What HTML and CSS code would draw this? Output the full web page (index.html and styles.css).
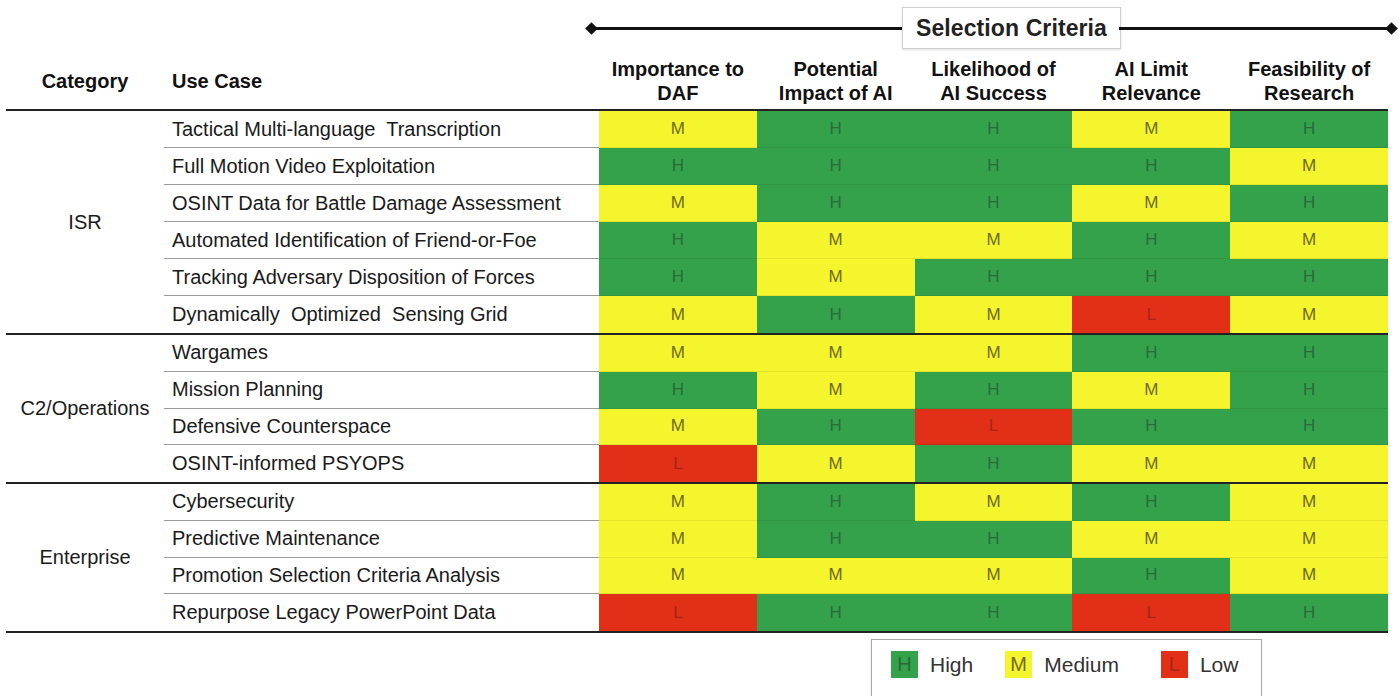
FILE: index.html
```html
<!DOCTYPE html>
<html>
<head>
<meta charset="utf-8">
<link rel="stylesheet" href="styles.css">
</head>
<body>
<div class="page">
  <div class="head">
    <div class="band">
      <span class="diamond"></span><span class="rule rule-left"></span>
      <div class="band-title">Selection Criteria</div>
      <span class="rule"></span><span class="diamond"></span>
    </div>
    <div class="h-cat">Category</div>
    <div class="h-use">Use Case</div>
    <div class="h-crit">Importance to<br>DAF</div>
    <div class="h-crit">Potential<br>Impact of AI</div>
    <div class="h-crit">Likelihood of<br>AI Success</div>
    <div class="h-crit">AI Limit<br>Relevance</div>
    <div class="h-crit">Feasibility of<br>Research</div>
  </div>

  <div class="group g-isr">
    <div class="cat r6">ISR</div>
    <div class="uc">Tactical Multi-language&nbsp; Transcription</div><div class="c m">M</div><div class="c h">H</div><div class="c h">H</div><div class="c m">M</div><div class="c h">H</div>
    <div class="uc">Full Motion Video Exploitation</div><div class="c h">H</div><div class="c h">H</div><div class="c h">H</div><div class="c h">H</div><div class="c m">M</div>
    <div class="uc">OSINT Data for Battle Damage Assessment</div><div class="c m">M</div><div class="c h">H</div><div class="c h">H</div><div class="c m">M</div><div class="c h">H</div>
    <div class="uc">Automated Identification of Friend-or-Foe</div><div class="c h">H</div><div class="c m">M</div><div class="c m">M</div><div class="c h">H</div><div class="c m">M</div>
    <div class="uc">Tracking Adversary Disposition of Forces</div><div class="c h">H</div><div class="c m">M</div><div class="c h">H</div><div class="c h">H</div><div class="c h">H</div>
    <div class="uc last">Dynamically&nbsp; Optimized&nbsp; Sensing Grid</div><div class="c m last">M</div><div class="c h last">H</div><div class="c m last">M</div><div class="c l last">L</div><div class="c m last">M</div>
  </div>

  <div class="group g-four">
    <div class="cat r4">C2/Operations</div>
    <div class="uc">Wargames</div><div class="c m">M</div><div class="c m">M</div><div class="c m">M</div><div class="c h">H</div><div class="c h">H</div>
    <div class="uc">Mission Planning</div><div class="c h">H</div><div class="c m">M</div><div class="c h">H</div><div class="c m">M</div><div class="c h">H</div>
    <div class="uc">Defensive Counterspace</div><div class="c m">M</div><div class="c h">H</div><div class="c l">L</div><div class="c h">H</div><div class="c h">H</div>
    <div class="uc last">OSINT-informed PSYOPS</div><div class="c l last">L</div><div class="c m last">M</div><div class="c h last">H</div><div class="c m last">M</div><div class="c m last">M</div>
  </div>

  <div class="group g-four g-end">
    <div class="cat r4">Enterprise</div>
    <div class="uc">Cybersecurity</div><div class="c m">M</div><div class="c h">H</div><div class="c m">M</div><div class="c h">H</div><div class="c m">M</div>
    <div class="uc">Predictive Maintenance</div><div class="c m">M</div><div class="c h">H</div><div class="c h">H</div><div class="c m">M</div><div class="c m">M</div>
    <div class="uc">Promotion Selection Criteria Analysis</div><div class="c m">M</div><div class="c m">M</div><div class="c m">M</div><div class="c h">H</div><div class="c m">M</div>
    <div class="uc last">Repurpose Legacy PowerPoint Data</div><div class="c l last">L</div><div class="c h last">H</div><div class="c h last">H</div><div class="c l last">L</div><div class="c h last">H</div>
  </div>

  <div class="legend">
    <div class="key"><span class="sq h">H</span>High</div>
    <div class="key"><span class="sq m">M</span>Medium</div>
    <div class="key key-low"><span class="sq l">L</span>Low</div>
  </div>
</div>
</body>
</html>
```

FILE: styles.css
```css
* { box-sizing: border-box; }
html, body { margin: 0; padding: 0; background: #fff; }
body {
  font-family: "Liberation Sans", Arial, sans-serif;
  color: #1a1a1a;
  overflow: hidden;
}
.page {
  width: 1399px;
  height: 696px;
  padding-left: 6px;
}
.head, .group {
  display: grid;
  grid-template-columns: 158px 435px repeat(5, 157.8px);
  width: 1382px;
}
.head {
  grid-template-rows: 52px 57px;
}
.band {
  grid-column: 3 / 8;
  grid-row: 1;
  display: flex;
  align-items: center;
  margin-left: -8px;
  margin-right: -4px;
  padding-top: 4px;
}
.rule {
  flex: 1 1 0;
  height: 3px;
  background: #111;
}
.rule-left { flex: 1 0 40px; }
.diamond {
  width: 9px;
  height: 9px;
  background: #111;
  transform: rotate(45deg);
  flex: none;
  margin: 0 -4px;
  position: relative;
  z-index: 1;
}
.band-title {
  width: 219px;
  height: 42px;
  border: 1px solid #cfcfcf;
  box-shadow: 0 1px 2px rgba(0,0,0,0.12);
  background: #fff;
  display: flex;
  align-items: center;
  justify-content: center;
  font-weight: bold;
  font-size: 23px;
  color: #222;
  letter-spacing: 0.1px;
  margin: 0 -2px;
  flex: none;
}
.h-cat, .h-use, .h-crit {
  grid-row: 2;
  font-weight: bold;
  font-size: 20px;
  color: #111;
}
.h-cat {
  grid-column: 1;
  align-self: center;
  text-align: center;
  padding-top: 2px;
}
.h-use {
  grid-column: 2;
  align-self: center;
  padding-left: 8px;
  padding-top: 2px;
}
.h-crit {
  align-self: end;
  text-align: center;
  line-height: 24px;
  padding-bottom: 4px;
}
.group {
  border-top: 2px solid #222;
  grid-auto-rows: 37px;
}
.g-four { grid-auto-rows: 36.75px; }
.g-end { border-bottom: 2px solid #222; }
.cat {
  grid-column: 1;
  display: flex;
  align-items: center;
  justify-content: center;
  font-size: 20px;
  color: #1a1a1a;
}
.r6 { grid-row: 1 / span 6; }
.r4 { grid-row: 1 / span 4; }
.uc {
  grid-column: 2;
  display: flex;
  align-items: center;
  padding-left: 8px;
  font-size: 20px;
  color: #1a1a1a;
  border-bottom: 1px solid #9a9a9a;
  white-space: nowrap;
}
.c {
  display: flex;
  align-items: center;
  justify-content: center;
  font-size: 17px;
  border-bottom: 1px solid rgba(0,0,0,0.07);
}
.last { border-bottom: none; }
.h { background: #34a24b; color: #2a6b38; }
.m { background: #f5f52d; color: #6f6a1c; }
.l { background: #e22f17; color: #a52616; }
.legend {
  margin-top: 6px;
  margin-left: 865px;
  width: 391px;
  height: 70px;
  border: 1px solid #a8a8a8;
  box-shadow: 0 1px 2px rgba(0,0,0,0.1);
  display: flex;
  align-items: flex-start;
  padding: 11px 0 0 19px;
  gap: 32px;
}
.key-low { margin-left: 10px; }
.key {
  display: flex;
  align-items: center;
  gap: 12px;
  font-size: 21px;
  color: #333;
  height: 27px;
}
.sq {
  width: 27px;
  height: 27px;
  display: flex;
  align-items: center;
  justify-content: center;
  font-size: 20px;
}
```
